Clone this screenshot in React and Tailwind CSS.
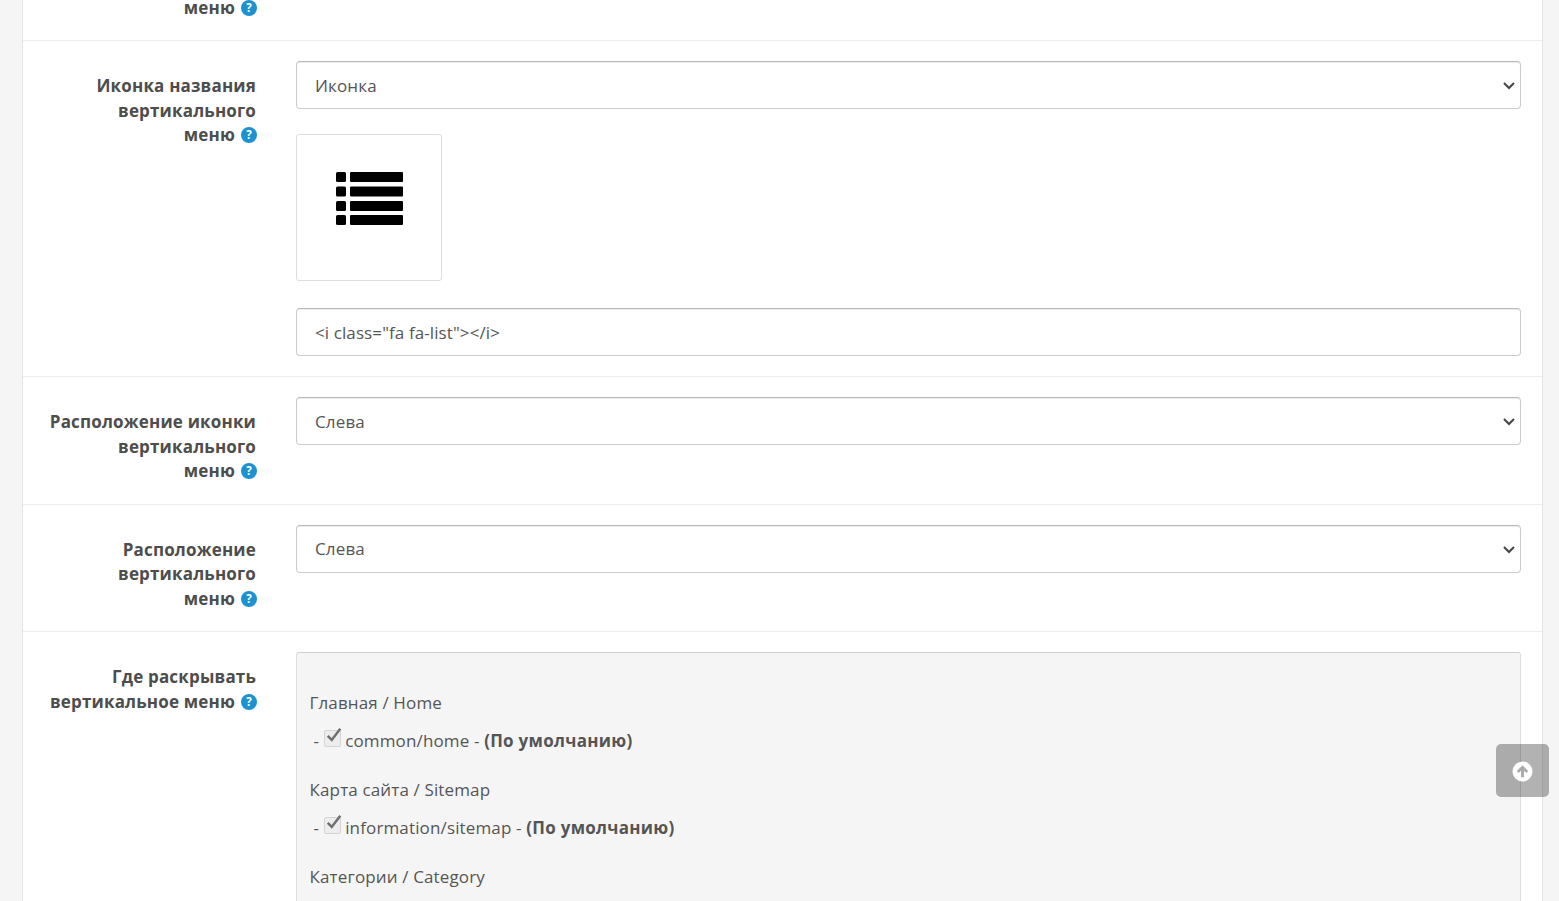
import React from 'react';

const Help = () => (
  <svg viewBox="0 0 16 16" className="inline-block w-[16px] h-[16px] ml-[6px] align-[-2px]">
    <circle cx="8" cy="8" r="8" fill="#1e91cf" />
    <text x="8" y="12" textAnchor="middle" fontSize="11.5" fontWeight="700" fill="#fff" fontFamily="Open Sans, sans-serif">?</text>
  </svg>
);

const Label = ({ lines, plain }) => (
  <div className={`w-[234px] shrink-0 text-right font-bold text-[17px] leading-[24.7px] tracking-[0.17px] text-[#4d4d4d] ${plain ? '' : 'pt-[13px] -mb-[0.5px]'}`}>
    {lines.map((l, i) => (
      <div key={i} className={`whitespace-nowrap ${i === lines.length - 1 ? '' : 'pr-[1px]'}`}>
        {l}
        {i === lines.length - 1 && <Help />}
      </div>
    ))}
  </div>
);

const Select = ({ children }) => (
  <div className="relative h-[48px] w-full rounded-[4px] border border-[#cccccc] border-t-[#b8b8b8] bg-white flex items-center pt-[1px] pl-[18px] text-[#555] text-[17px] tracking-[0.15px] shadow-[inset_0_1px_1px_rgba(0,0,0,0.075)]">
    {children}
    <svg viewBox="0 0 14 10" className="absolute right-[4px] top-[19px] w-[14px] h-[10px]" fill="none" stroke="#444" strokeWidth="2">
      <path d="M2 2 L7 7 L12 2" />
    </svg>
  </div>
);

const Row = ({ lines, children, last }) => (
  <div className={`flex pr-[21px] pt-[20px] pb-[20px] gap-[39px] ${last ? '' : 'border-b border-[#ededed]'}`}>
    <Label lines={lines} />
    <div className="flex-1 min-w-0">{children}</div>
  </div>
);

const Check = () => (
  <span className="relative inline-block w-[17px] h-[17px] border border-[#d4d4d4] bg-[#ededed] rounded-[2px] align-[0px] ml-[0.5px] mr-[4px]">
    <svg viewBox="0 0 20 20" className="absolute left-[0px] top-[-5px] w-[18px] h-[18px]" fill="none" stroke="#707070" strokeWidth="2.8">
      <path d="M3 11 L7.5 15.5 L17 3" />
    </svg>
  </span>
);

const Group = ({ title, item }) => (
  <>
    <div className="leading-[25px] h-[25px]">{title}</div>
    {item && (
      <div className="leading-[25px] h-[25px] mt-[13px] mb-[24px] pl-[4px] whitespace-nowrap">
        - <Check />{item} - <b className="font-bold tracking-[0.28px]">(По умолчанию)</b>
      </div>
    )}
  </>
);

export default function App() {
  return (
    <div className="relative h-[901px] overflow-hidden bg-[#f5f5f5] font-['Open_Sans',sans-serif]">
      <div className="ml-[22px] w-[1521px] h-[901px] bg-white border-x border-[#e4e4e4]">
        <div className="h-[41px] pb-[19px] flex items-end border-b border-[#ededed]">
          <Label lines={['меню']} plain />
        </div>
        <Row lines={['Иконка названия', 'вертикального', 'меню']}>
          <Select>Иконка</Select>
          <div className="mt-[25px] w-[146px] h-[147px] rounded-[3px] border border-[#dddddd] bg-white flex justify-center pt-[37px] pl-[1px]">
            <svg viewBox="0 0 68 54" className="w-[68px] h-[54px]" fill="#000">
              <rect x="0" y="0" width="10" height="10" rx="1.5" />
              <rect x="14" y="0" width="53" height="10" rx="1" />
              <rect x="0" y="14.5" width="10" height="10" rx="1.5" />
              <rect x="14" y="14.5" width="53" height="10" rx="1" />
              <rect x="0" y="29" width="10" height="10" rx="1.5" />
              <rect x="14" y="29" width="53" height="10" rx="1" />
              <rect x="0" y="43" width="10" height="10" rx="1.5" />
              <rect x="14" y="43" width="53" height="10" rx="1" />
            </svg>
          </div>
          <div className="mt-[27px] h-[48px] rounded-[4px] border border-[#cccccc] border-t-[#b8b8b8] flex items-center pt-[1px] pl-[18px] text-[#555] text-[17px] tracking-[0.1px] shadow-[inset_0_1px_1px_rgba(0,0,0,0.075)]">
            {'<i class="fa fa-list"></i>'}
          </div>
        </Row>
        <Row lines={['Расположение иконки', 'вертикального', 'меню']}>
          <Select>Слева</Select>
        </Row>
        <Row lines={['Расположение', 'вертикального', 'меню']}>
          <Select>Слева</Select>
        </Row>
        <Row lines={['Где раскрывать', 'вертикальное меню']} last>
          <div className="h-[400px] rounded-[3px] border border-[#dedede] border-t-[#cfcfcf] bg-[#f5f5f5] pl-[12.5px] pt-[37px] text-[17px] tracking-[0.14px] text-[#555]">
            <Group title="Главная / Home" item="common/home" />
            <Group title="Карта сайта / Sitemap" item="information/sitemap" />
            <Group title="Категории / Category" />
          </div>
        </Row>
      </div>
      <div className="absolute left-[1496px] top-[744px] w-[53px] h-[53px] rounded-[5px] bg-[rgba(0,0,0,0.3)] flex items-center justify-center pt-[1px]">
        <svg viewBox="0 0 22 22" className="w-[21px] h-[21px]">
          <circle cx="11" cy="11" r="10.5" fill="#fff" />
          <path d="M11 4.5 L17 10.5 L15 12.5 L12.6 10.2 V17 H9.4 V10.2 L7 12.5 L5 10.5 Z" fill="#ababab" />
        </svg>
      </div>
    </div>
  );
}
